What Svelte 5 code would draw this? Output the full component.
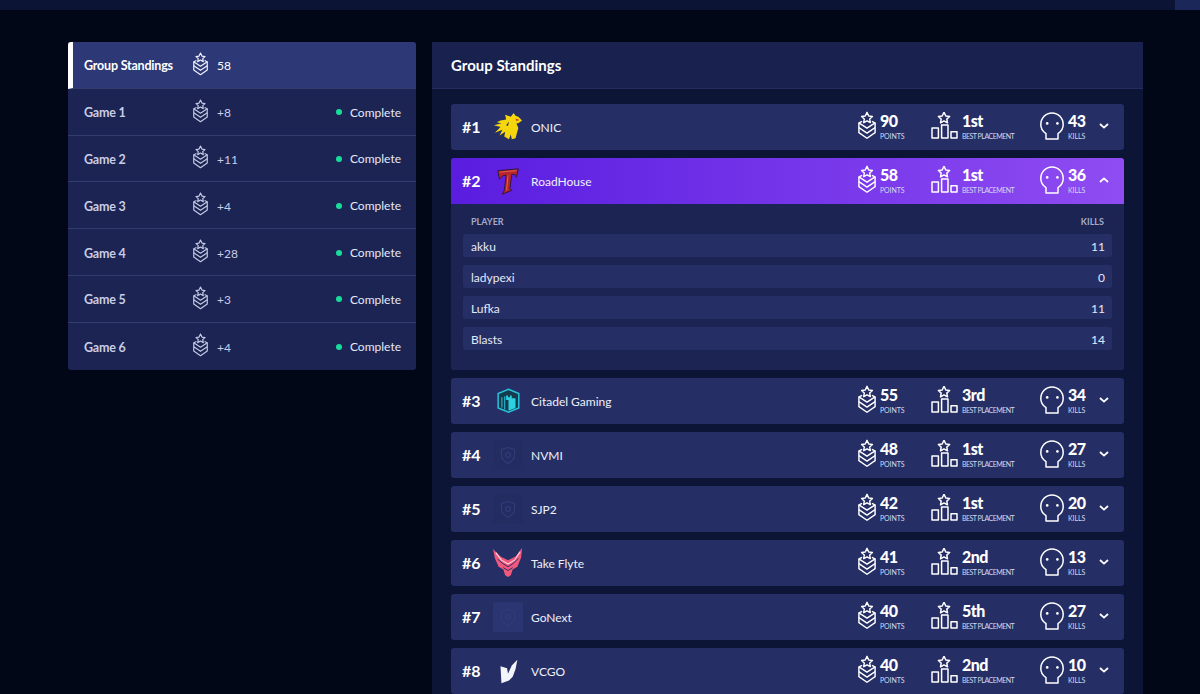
<script>
	const games = [
		{ name: "Game 1", pts: "+8" },
		{ name: "Game 2", pts: "+11" },
		{ name: "Game 3", pts: "+4" },
		{ name: "Game 4", pts: "+28" },
		{ name: "Game 5", pts: "+3" },
		{ name: "Game 6", pts: "+4" }
	];

	const teams = [
		{ rank: 1, name: "ONIC", logo: "onic", points: 90, best: "1st", kills: 43 },
		{ rank: 2, name: "RoadHouse", logo: "road", points: 58, best: "1st", kills: 36, open: true },
		{ rank: 3, name: "Citadel Gaming", logo: "citadel", points: 55, best: "3rd", kills: 34 },
		{ rank: 4, name: "NVMI", logo: "none", points: 48, best: "1st", kills: 27 },
		{ rank: 5, name: "SJP2", logo: "none", points: 42, best: "1st", kills: 20 },
		{ rank: 6, name: "Take Flyte", logo: "flyte", points: 41, best: "2nd", kills: 13 },
		{ rank: 7, name: "GoNext", logo: "light", points: 40, best: "5th", kills: 27 },
		{ rank: 8, name: "VCGO", logo: "vcgo", points: 40, best: "2nd", kills: 10 }
	];

	const players = [
		{ name: "akku", kills: 11 },
		{ name: "ladypexi", kills: 0 },
		{ name: "Lufka", kills: 11 },
		{ name: "Blasts", kills: 14 }
	];
</script>

{#snippet star(cx, cy, r)}
	<path
		d={`M${cx} ${cy - r} L${cx + r * 0.32} ${cy - r * 0.32} L${cx + r} ${cy - r * 0.22} L${cx + r * 0.5} ${cy + r * 0.24} L${cx + r * 0.62} ${cy + r * 0.9} L${cx} ${cy + r * 0.56} L${cx - r * 0.62} ${cy + r * 0.9} L${cx - r * 0.5} ${cy + r * 0.24} L${cx - r} ${cy - r * 0.22} L${cx - r * 0.32} ${cy - r * 0.32} Z`}
	/>
{/snippet}

{#snippet rankIcon(cls)}
	<svg class={cls} viewBox="0 0 20 30" fill="none" stroke="currentColor" stroke-width="1.6" stroke-linejoin="round">
		{@render star(10, 6.4, 6)}
		<path d="M4.6 10.4 L1 12 V23 L10 29.2 L19 23 V12 L15.4 10.4" />
		<path d="M1 12 L10 18 L19 12" />
		<path d="M1 17.4 L10 23.4 L19 17.4" />
	</svg>
{/snippet}

{#snippet podiumIcon()}
	<svg class="podium" viewBox="0 0 27 27" fill="none" stroke="currentColor" stroke-width="1.5" stroke-linejoin="round">
		{@render star(13, 5.8, 5.6)}
		<rect x="1" y="16" width="6.4" height="10" />
		<rect x="10.6" y="13" width="6.4" height="13" />
		<rect x="20" y="19.8" width="6" height="6.2" />
	</svg>
{/snippet}

{#snippet skullIcon()}
	<svg class="skull" viewBox="0 0 24 28" fill="none" stroke="currentColor" stroke-width="1.5" stroke-linejoin="round">
		<path d="M6 21.6 C3 19.8 0.8 16.4 0.8 12.6 C0.8 6 5.8 1 12 1 C18.2 1 23.2 6 23.2 12.6 C23.2 16.4 21 19.8 18 21.6 V27 H6 Z" />
		<circle cx="7.2" cy="11.4" r="1.3" fill="currentColor" stroke="none" />
		<circle cx="17.4" cy="11.4" r="1.3" fill="currentColor" stroke="none" />
	</svg>
{/snippet}

{#snippet logo(kind)}
	{#if kind === "onic"}
		<svg class="logo" viewBox="0 0 32 32">
			<path fill="#f6d70c" d="M8 9 L14 8 L13 3 L19 5 L22 1 L24 4 L27 5 L31 9 L27 12 L25 12 L27 17 L24 28 L20 29 L19 24 L17 29 L12 26 L13 21 L7 25 L10 19 L2 22 L8 16 L1 14 L9 12 L4 11 Z" />
			<path fill="#c8322a" d="M24 7 L28 8.5 L25 9.5 Z" />
			<path fill="#252f66" d="M14 14 L17 10 L16 15 Z" />
		</svg>
	{:else if kind === "road"}
		<svg class="logo" viewBox="0 0 32 32">
			<path fill="#b8242c" stroke="#2a1a3c" stroke-width="1" d="M5 5 L27 3 L25 12 L23 9 L20 9 L18 24 L20 26 L10 30 L12 26 L14 10 L11 10 L7 14 Z" />
			<path fill="none" stroke="#ec6a50" stroke-width="0.9" d="M7 6.5 L25 5 M16 10 L14.5 26" />
		</svg>
	{:else if kind === "citadel"}
		<svg class="logo" viewBox="0 0 32 32">
			<path fill="#163a4e" stroke="#29c2d8" stroke-width="1.6" d="M16.5 3.5 L27.5 8 V23.5 L16.5 28 L5.5 23.5 V8 Z" />
			<path fill="#2cd0e0" d="M14 10 H16 V12 H18 V10 H20 V13 H24 V23.5 L16.5 26.5 V15 H14 Z" />
			<path fill="none" stroke="#2cd0e0" stroke-width="1" d="M9.5 12 V23 M12.5 11 V25" />
		</svg>
	{:else if kind === "flyte"}
		<svg class="logo" viewBox="0 0 32 32">
			<path fill="#f2577c" d="M0 1 L8 9 L16 13 L24 9 L31 0 L30 10 L26 20 L21 23 L19 29 L16 31 L13 29 L11 23 L6 20 L2 11 Z" />
			<path fill="none" stroke="#ffd9e2" stroke-width="1.2" d="M3 5 L9 13 L16 17 L23 13 L29 4" />
			<path fill="none" stroke="#252f66" stroke-width="1" d="M5 12 L11 17 L16 20 L21 17 L27 11 M11 21 L16 24 L21 21" />
		</svg>
	{:else if kind === "vcgo"}
		<svg class="logo" viewBox="0 0 32 32">
			<path fill="#f4f5fb" d="M8 11 L15 13 L16 19 L20 10 L26 4 L24 14 L21 22 L17 26 L9 29 Z" />
		</svg>
	{:else}
		<svg class="logo" viewBox="0 0 32 32">
			<rect width="32" height="32" fill={kind === "light" ? "#2a3572" : "#232d62"} />
			<path fill="none" stroke="#303b78" stroke-width="1.3" d="M16 8 L23 10 V16 C23 20 20 23 16 25 C12 23 9 20 9 16 V10 Z" />
			<circle cx="16" cy="16" r="2.6" fill="none" stroke="#303b78" stroke-width="1.3" />
		</svg>
	{/if}
{/snippet}

<div class="page">
	<div class="topbar"><span class="topbar-tab"></span></div>

	<div class="content">
		<aside class="side">
			<div class="side-row active">
				<span class="side-name">Group Standings</span>
				{@render rankIcon("rank-small")}
				<span class="side-pts">58</span>
			</div>
			{#each games as game}
				<div class="side-row">
					<span class="side-name">{game.name}</span>
					{@render rankIcon("rank-small")}
					<span class="side-pts">{game.pts}</span>
					<span class="status"><i class="dot"></i>Complete</span>
				</div>
			{/each}
		</aside>

		<main class="panel">
			<h1 class="panel-title">Group Standings</h1>
			<div class="teams">
				{#each teams as team}
					<div class="team" class:open={team.open}>
						<div class="team-row">
							<span class="rank">#{team.rank}</span>
							<span class="logo-box">{@render logo(team.logo)}</span>
							<span class="team-name">{team.name}</span>

							<div class="stat stat-points">
								{@render rankIcon("rank-big")}
								<div><b>{team.points}</b><small>POINTS</small></div>
							</div>
							<div class="stat stat-best">
								{@render podiumIcon()}
								<div><b>{team.best}</b><small class="tight">BEST PLACEMENT</small></div>
							</div>
							<div class="stat stat-kills">
								{@render skullIcon()}
								<div><b>{team.kills}</b><small>KILLS</small></div>
							</div>
							<svg class="chevron" viewBox="0 0 10 6" fill="none" stroke="currentColor" stroke-width="1.8">
								<path d={team.open ? "M1 5 L5 1.4 L9 5" : "M1 1 L5 4.6 L9 1"} />
							</svg>
						</div>

						{#if team.open}
							<div class="detail">
								<div class="detail-head"><span>PLAYER</span><span>KILLS</span></div>
								{#each players as player}
									<div class="player"><span>{player.name}</span><span class="player-kills">{player.kills}</span></div>
								{/each}
							</div>
						{/if}
					</div>
				{/each}
			</div>
		</main>
	</div>
</div>

<style>
	:global(body) {
		background: #020718;
	}

	.page {
		height: 694px;
		overflow: hidden;
		font-family: Lato, "Noto Sans", sans-serif;
		color: #eef0fa;
		background: #020718;
	}

	.topbar {
		height: 10px;
		background: #0b1434;
		display: flex;
		justify-content: flex-end;
	}

	.topbar-tab {
		width: 25px;
		background: #1c2759;
	}

	.content {
		display: flex;
		align-items: flex-start;
		gap: 16px;
		padding: 32px 57px 0 68px;
	}

	.side {
		width: 348px;
		flex: none;
		border-radius: 3px;
		overflow: hidden;
		background: #1b2453;
	}

	.side-row {
		height: 46.8px;
		box-sizing: border-box;
		display: flex;
		align-items: center;
		padding: 0 15px 0 16px;
		border-bottom: 1px solid #323c6d;
		font-size: 12px;
		color: #c9cde6;
	}

	.side-row:last-child {
		border-bottom: none;
	}

	.side-row.active {
		background: #2d3877;
		border-left: 5px solid #fff;
		padding-left: 11px;
		color: #fff;
	}

	.side-name {
		width: 108px;
		padding-top: 2px;
		font-size: 12.5px;
		font-weight: 700;
		letter-spacing: -0.2px;
	}

	.side-pts {
		margin-left: 9px;
		padding-top: 2px;
	}

	.status {
		margin-left: auto;
		padding-top: 1px;
		display: flex;
		align-items: center;
		gap: 8px;
		color: #e6e9f7;
	}

	.dot {
		width: 6px;
		height: 6px;
		border-radius: 50%;
		background: #19dc9b;
	}

	.rank-small {
		width: 15px;
		height: 24px;
		margin: -2px 0 0 1px;
		color: #c3c8e2;
	}

	.side-row.active .rank-small {
		color: #eef0fa;
	}

	.panel {
		flex: 1;
		background: #0c1536;
		border-radius: 3px 3px 0 0;
	}

	.panel-title {
		margin: 0;
		height: 47px;
		box-sizing: border-box;
		padding: 0 19px 1px;
		display: flex;
		align-items: center;
		background: #19224f;
		font-size: 15px;
		font-weight: 700;
		color: #fff;
		border-bottom: 1px solid #232d5e;
	}

	.teams {
		display: flex;
		flex-direction: column;
		gap: 8px;
		padding: 15px 19px 0;
	}

	.team {
		border-radius: 3px;
		overflow: hidden;
		background: #1b2453;
	}

	.team-row {
		height: 46px;
		display: flex;
		align-items: center;
		padding: 0 15px 0 11px;
		background: #252f66;
	}

	.team.open .team-row {
		background: linear-gradient(90deg, #5a1de0, #8f4cf2);
	}

	.rank {
		width: 31px;
		padding-bottom: 1px;
		font-size: 16px;
		font-weight: 700;
		color: #fff;
	}

	.logo-box {
		width: 30px;
		height: 30px;
		display: flex;
		margin-right: 8px;
	}

	.logo {
		width: 30px;
		height: 30px;
	}

	.team-name {
		font-size: 12px;
		color: #eef0fa;
	}

	.stat {
		display: flex;
		align-items: center;
		color: #fff;
	}

	.stat svg {
		margin-top: -3px;
	}

	.stat div {
		display: flex;
		flex-direction: column;
	}

	.stat b {
		font-size: 16px;
		line-height: 18px;
		font-weight: 900;
		letter-spacing: -0.5px;
	}

	.stat small {
		font-size: 7px;
		line-height: 12px;
		letter-spacing: -0.1px;
		color: #d3d7ee;
	}

	.stat small.tight {
		letter-spacing: -0.5px;
	}

	.stat-points {
		margin-left: auto;
		width: 73px;
		gap: 4px;
	}

	.rank-big {
		width: 18px;
		height: 29px;
	}

	.stat-best {
		width: 109px;
		gap: 4px;
	}

	.podium {
		width: 27px;
		height: 27px;
	}

	.stat-kills {
		width: 59px;
		gap: 4px;
	}

	.skull {
		width: 24px;
		height: 28px;
	}

	.chevron {
		width: 10px;
		height: 6px;
		margin-top: -2px;
		color: #fff;
	}

	.detail {
		padding: 12px 12px 20px;
		background: #1b2453;
	}

	.detail-head {
		display: flex;
		justify-content: space-between;
		padding: 0 8px;
		height: 18px;
		font-size: 9px;
		font-weight: 700;
		color: #a4aac9;
	}

	.player {
		height: 23px;
		box-sizing: border-box;
		margin-bottom: 8px;
		display: flex;
		justify-content: space-between;
		align-items: center;
		padding: 1px 7px 0 8px;
		border-radius: 2px;
		background: #252f66;
		font-size: 12px;
		color: #e6e9f7;
	}

	.player:last-child {
		margin-bottom: 0;
	}

	.player-kills {
		font-size: 12px;
	}
</style>
